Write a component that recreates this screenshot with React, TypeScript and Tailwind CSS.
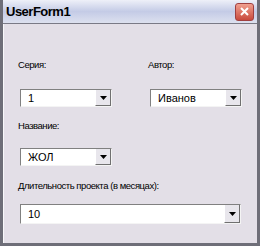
import React from "react";

function Combo({ value, width, height = "h-[18px]" }: { value: string; width: string; height?: string }) {
  return (
    <div
      className={`${width} ${height} ml-[2px] flex bg-white border-t border-l border-t-[#808080] border-l-[#808080] border-b border-r border-b-[#f4f4f4] border-r-[#f4f4f4]`}
    >
      <div className="flex-1 flex items-center pl-[7px] text-[11px] tracking-normal text-black">
        {value}
      </div>
      <div className="w-[16px] h-full bg-[#e8e6ec] border-l border-l-[#ffffff] border-b border-b-[#707070] border-r border-r-[#707070] flex items-center justify-center">
        <svg width="7" height="4" viewBox="0 0 7 4">
          <polygon points="0,0 7,0 3.5,4" fill="#000" />
        </svg>
      </div>
    </div>
  );
}

export default function App() {
  return (
    <div
      className="w-[260px] h-[246px] bg-[#e3dfe7] flex flex-col border-[#6e6e78] border-l-[3px] border-r-[3px] border-b-[3px] overflow-hidden"
      style={{ fontFamily: '"Liberation Sans", Arial, sans-serif' }}
    >
      <div className="h-[24px] flex items-center justify-between pl-[3px] pr-[3px] bg-gradient-to-b from-[#eef0f8] via-[#c4cbe6] to-[#dde1ef] border-b border-b-[#7a7a86]">
        <span className="text-[13px] font-bold text-black tracking-[-0.5px]">UserForm1</span>
        <div className="w-[19px] h-[18px] rounded-[3px] bg-gradient-to-b from-[#f0a090] to-[#c8483c] border border-[#a04040] flex items-center justify-center">
          <svg width="11" height="11" viewBox="0 0 11 11">
            <path d="M2 2 L9 9 M9 2 L2 9" stroke="#fff" strokeWidth="2" />
          </svg>
        </div>
      </div>
      <div className="flex-1 border-l border-l-[#f8f8fa] pl-[14px] pt-[35px] text-[9.5px] tracking-[-0.45px] text-black">
        <div className="flex gap-[36px]">
          <div className="flex flex-col gap-[18px]">
            <div className="h-[12px] leading-[12px]">Серия:</div>
            <Combo value="1" width="w-[92px]" />
          </div>
          <div className="flex flex-col gap-[18px]">
            <div className="h-[12px] leading-[12px]">Автор:</div>
            <Combo value="Иванов" width="w-[92px]" />
          </div>
        </div>
        <div className="flex flex-col gap-[16px] mt-[13px]">
          <div className="h-[12px] leading-[12px]">Название:</div>
          <Combo value="ЖОЛ" width="w-[92px]" />
        </div>
        <div className="flex flex-col gap-[12px] mt-[14px]">
          <div className="h-[12px] leading-[12px]">Длительность проекта (в месяцах):</div>
          <Combo value="10" width="w-[221px]" height="h-[20px]" />
        </div>
      </div>
    </div>
  );
}
